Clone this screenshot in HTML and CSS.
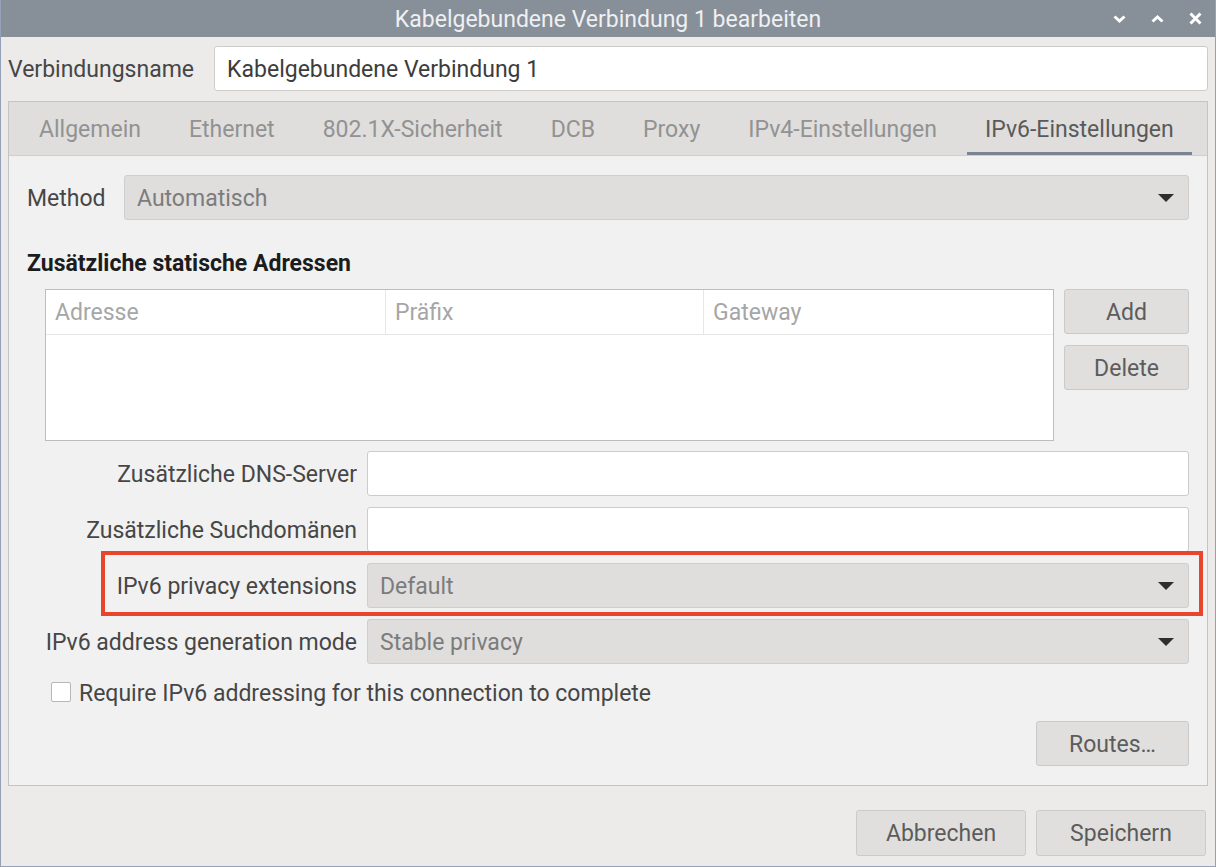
FILE: index.html
```html
<!DOCTYPE html>
<html>
<head>
	<meta charset="utf-8">
	<title>Kabelgebundene Verbindung 1 bearbeiten</title>
	<link rel="stylesheet" href="styles.css">
</head>
<body>
	<div class="window">
		<!-- Titelleiste -->
		<div class="titlebar">
			<span></span>
			<span class="title">Kabelgebundene Verbindung 1 bearbeiten</span>
			<div class="win-btns">
				<span class="win-btn"><svg width="13" height="8" viewBox="0 0 13 8"><path d="M1.5 1.5 L6.5 6 L11.5 1.5" fill="none" stroke="#fff" stroke-width="3"/></svg></span>
				<span class="win-btn"><svg width="13" height="8" viewBox="0 0 13 8"><path d="M1.5 6.5 L6.5 2 L11.5 6.5" fill="none" stroke="#fff" stroke-width="3"/></svg></span>
				<span class="win-btn"><svg width="13" height="13" viewBox="0 0 13 13"><path d="M1.5 1.5 L11.5 11.5 M11.5 1.5 L1.5 11.5" fill="none" stroke="#fff" stroke-width="3"/></svg></span>
			</div>
		</div>

		<div class="dialog">
			<div class="name-row">
				<span class="name-label">Verbindungsname</span>
				<div class="entry">Kabelgebundene Verbindung 1</div>
			</div>

			<div class="notebook">
				<ul class="tabs">
					<li>Allgemein</li>
					<li>Ethernet</li>
					<li>802.1X-Sicherheit</li>
					<li>DCB</li>
					<li>Proxy</li>
					<li>IPv4-Einstellungen</li>
					<li class="active">IPv6-Einstellungen</li>
				</ul>

				<div class="page">
					<div class="method-row">
						<span class="method-label">Method</span>
						<div class="combo"><span>Automatisch</span><i class="arrow"></i></div>
					</div>

					<h3 class="section">Zusätzliche statische Adressen</h3>

					<div class="addr">
						<div class="addr-table">
							<div class="thead">
								<span class="col col-addr">Adresse</span>
								<span class="col col-prefix">Präfix</span>
								<span class="col col-gw">Gateway</span>
							</div>
						</div>
						<div class="side-btns">
							<a class="btn">Add</a>
							<a class="btn">Delete</a>
						</div>
					</div>

					<div class="form">
						<div class="form-row">
							<span class="form-label">Zusätzliche DNS-Server</span>
							<div class="entry"></div>
						</div>
						<div class="form-row">
							<span class="form-label">Zusätzliche Suchdomänen</span>
							<div class="entry"></div>
						</div>
						<div class="form-row marked">
							<span class="form-label">IPv6 privacy extensions</span>
							<div class="combo"><span>Default</span><i class="arrow"></i></div>
						</div>
						<div class="form-row">
							<span class="form-label">IPv6 address generation mode</span>
							<div class="combo"><span>Stable privacy</span><i class="arrow"></i></div>
						</div>
					</div>

					<label class="check-row">
						<span class="checkbox"></span>
						<span class="check-label">Require IPv6 addressing for this connection to complete</span>
					</label>

					<div class="routes">
						<a class="btn btn-routes">Routes…</a>
					</div>
				</div>
			</div>

			<div class="actions">
				<a class="btn btn-action">Abbrechen</a>
				<a class="btn btn-action">Speichern</a>
			</div>
		</div>
	</div>
</body>
</html>
```

FILE: styles.css
```css
*{
	margin: 0;
	padding: 0;
	box-sizing: border-box;
}
body{
	width: 1216px;
	height: 867px;
	overflow: hidden;
	font-family: Roboto, "Noto Sans", sans-serif;
	font-size: 23px;
	color: #464646;
	background: #ecebe9;
}

.window{
	height: 867px;
	display: flex;
	flex-direction: column;
	border: 1px solid #94a1b8;
	border-top: none;
}

/* Titelleiste */
.titlebar{
	height: 37px;
	flex: none;
	display: grid;
	grid-template-columns: 1fr auto 1fr;
	align-items: center;
	background: #878f99;
}
.title{
	padding-top: 2px;
	color: #eef0f2;
	font-size: 23px;
}
.win-btns{
	justify-self: end;
	display: flex;
	padding-right: 1px;
}
.win-btn{
	width: 38px;
	height: 37px;
	display: flex;
	align-items: center;
	justify-content: center;
}

.dialog{
	flex: 1;
	display: flex;
	flex-direction: column;
	padding: 9px 7px 0 7px;
}

.name-row{
	display: flex;
	align-items: center;
	gap: 20px;
}
.name-label,
.method-label,
.form-label,
.check-label{
	padding-top: 2px;
}
.entry{
	flex: 1;
	height: 45px;
	line-height: 45px;
	padding-left: 12px;
	background: #fff;
	border: 1px solid #cdcccb;
	border-radius: 3px;
	color: #3c3c3c;
}

/* Reiter */
.notebook{
	margin-top: 10px;
	border: 1px solid #c4c4c3;
	background: #f1f1f1;
}
.tabs{
	display: flex;
	height: 54px;
	padding-left: 6px;
	background: #dfdedc;
	border-bottom: 1px solid #cfcecd;
	list-style: none;
}
.tabs li{
	margin: 0 6px;
	padding: 0 18px;
	line-height: 55px;
	color: #929292;
	white-space: nowrap;
}
.tabs li.active{
	color: #5a5a5a;
	box-shadow: inset 0 -3px 0 #7b8591;
}

.page{
	padding: 19px 18px 19px 18px;
}

.method-row{
	display: flex;
	align-items: center;
}
.method-label{
	width: 97px;
	flex: none;
}
.combo{
	flex: 1;
	height: 45px;
	display: flex;
	align-items: center;
	justify-content: space-between;
	padding: 2px 14px 0 12px;
	background: #dfdedc;
	border: 1px solid #cfcecc;
	border-radius: 3px;
	color: #7c7c7c;
}
.arrow{
	width: 0;
	height: 0;
	margin-top: -2px;
	border-left: 8px solid transparent;
	border-right: 8px solid transparent;
	border-top: 8px solid #2e2e2e;
}

.section{
	margin: 32px 0 13px;
	padding-top: 2px;
	font-size: 23px;
	line-height: 24px;
	font-weight: bold;
	color: #1c1c1c;
}
.page .section{
	height: 24px;
	box-sizing: content-box;
	margin-top: 30px;
}

.addr{
	display: flex;
	gap: 10px;
	margin-left: 18px;
}
.addr-table{
	flex: 1;
	height: 152px;
	background: #fff;
	border: 1px solid #bdbdbc;
}
.thead{
	display: flex;
	height: 45px;
	border-bottom: 1px solid #e7e7e7;
	color: #a6a6a6;
}
.col{
	line-height: 46px;
	padding-left: 9px;
}
.col-addr{
	width: 339px;
}
.col-prefix{
	width: 318px;
	border-left: 1px solid #e7e7e7;
}
.col-gw{
	flex: 1;
	border-left: 1px solid #e7e7e7;
}
.side-btns{
	width: 125px;
	display: flex;
	flex-direction: column;
	gap: 11px;
}

.btn{
	display: block;
	height: 45px;
	line-height: 45px;
	text-align: center;
	background: #e0dfdd;
	border: 1px solid #cbcac8;
	border-radius: 3px;
	color: #5c5c5c;
	cursor: pointer;
}

.form{
	margin: 10px 0 0 18px;
	display: flex;
	flex-direction: column;
	gap: 11px;
}
.form-row{
	display: flex;
	align-items: center;
}
.form-label{
	width: 312px;
	flex: none;
	margin-right: 10px;
	text-align: right;
	white-space: nowrap;
}
.form-row.marked{
	position: relative;
}
.form-row.marked:after{
	content: '';
	position: absolute;
	left: 56px;
	right: -14px;
	top: -12px;
	bottom: -8px;
	border: 4px solid #e8452d;
}

.check-row{
	display: flex;
	align-items: center;
	gap: 8px;
	height: 24px;
	margin: 16px 0 0 24px;
}
.checkbox{
	width: 20px;
	height: 20px;
	background: #fff;
	border: 1px solid #b7b7b6;
	border-radius: 2px;
}

.routes{
	display: flex;
	justify-content: flex-end;
	margin-top: 17px;
}
.btn-routes{
	width: 153px;
}

.actions{
	display: flex;
	justify-content: flex-end;
	gap: 10px;
	margin: 24px 2px 0 0;
}
.btn-action{
	width: 170px;
	height: 46px;
	line-height: 46px;
}
```
